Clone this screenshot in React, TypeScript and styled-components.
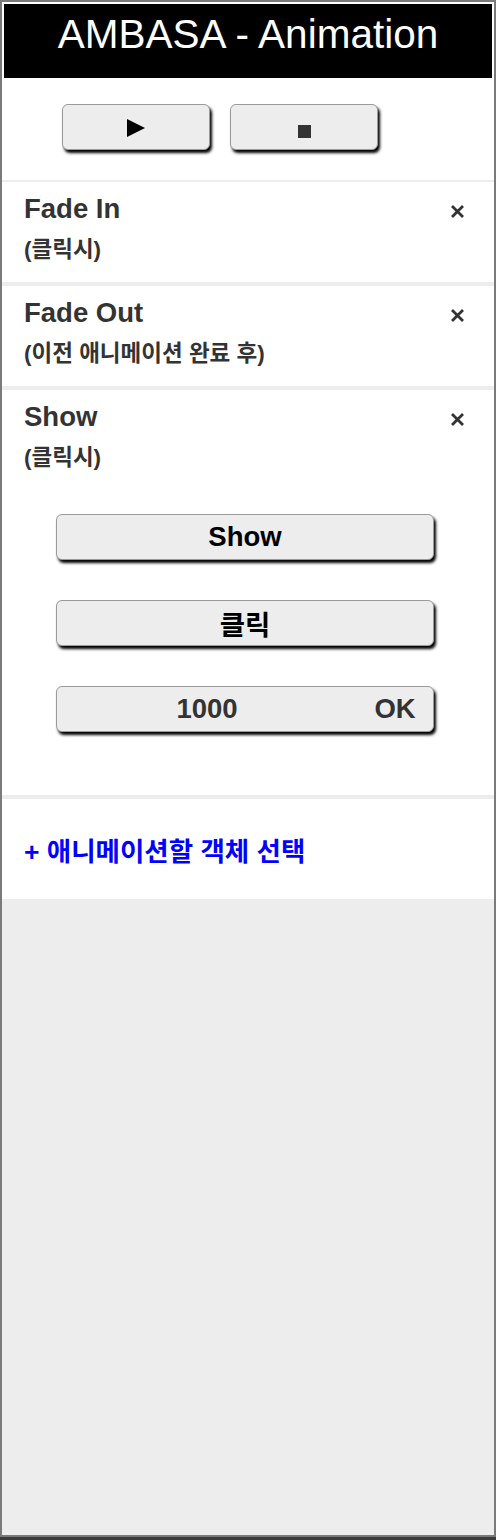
import React from 'react'
import styled, { createGlobalStyle } from 'styled-components'

const GlobalStyle = createGlobalStyle`
  html, body {
    margin: 0;
    padding: 0;
    background: #3c3c3c;
  }
  body {
    font-family: "Liberation Sans", "Noto Sans CJK KR", sans-serif;
  }
  * {
    box-sizing: border-box;
  }
`

const Outer = styled.div`
  height: 1540px;
  padding-bottom: 3px;
  background: #3c3c3c;
`

const Frame = styled.div`
  display: flex;
  flex-direction: column;
  height: 100%;
  border: 2px solid #7a7a7a;
  background: #ededed;
  overflow: hidden;
`

const HeaderWrap = styled.div`
  background: #fff;
  padding: 2px 2px 0;
`

const Header = styled.h1`
  margin: 0;
  height: 74px;
  padding-top: 7px;
  background: #000;
  color: #fff;
  font-size: 40.5px;
  font-weight: 400;
  line-height: 46px;
  text-align: center;
`

const Toolbar = styled.div`
  display: flex;
  gap: 20px;
  height: 102px;
  padding: 26px 0 0 60px;
  background: #fff;
`

const RaisedButton = styled.button<{ $width: number }>`
  display: flex;
  align-items: center;
  justify-content: center;
  width: ${p => p.$width}px;
  height: 46px;
  padding: 0;
  border: 1px solid #9a9a9a;
  border-radius: 6px;
  background: #ededed;
  box-shadow: 2px 3px 3px #000;
  font-family: "Liberation Sans", "Noto Sans CJK KR", sans-serif;
  font-size: 27.5px;
  font-weight: 700;
  color: #000;
  cursor: pointer;
`

const Icon = styled.svg<{ $shift: number }>`
  display: block;
  margin-top: ${p => p.$shift}px;
`

const Item = styled.div<{ $last?: boolean }>`
  background: #fff;
  border-top: 2px solid #ededed;
  border-bottom: 2px solid #ededed;
  padding: 11px 30px ${p => (p.$last ? '63px' : '19px')} 22px;
`

const TitleRow = styled.div`
  display: flex;
  align-items: center;
  justify-content: space-between;
`

const Title = styled.div`
  font-size: 27.5px;
  font-weight: 700;
  line-height: 32px;
  color: #333;
`

const Close = styled.svg`
  display: block;
  margin-top: 4px;
  cursor: pointer;
`

const Trigger = styled.div`
  margin-top: 11px;
  font-size: 22.5px;
  font-weight: 700;
  line-height: 27px;
  color: #333;
`

const Options = styled.div`
  display: flex;
  flex-direction: column;
  gap: 40px;
  margin: 43px 0 0 32px;
`

const DurationBox = styled.div`
  display: flex;
  width: 378px;
  height: 46px;
  border: 1px solid #9a9a9a;
  border-radius: 6px;
  background: #ededed;
  box-shadow: 2px 3px 3px #000;
  overflow: hidden;
`

const DurationInput = styled.input`
  flex: 1;
  min-width: 0;
  border: 0;
  background: transparent;
  text-align: center;
  font-family: "Liberation Sans", sans-serif;
  font-size: 27.5px;
  font-weight: 700;
  color: #333;
  outline: none;
`

const OkButton = styled.button`
  width: 76px;
  border: 0;
  padding: 0;
  background: transparent;
  font-family: "Liberation Sans", sans-serif;
  font-size: 27.5px;
  font-weight: 700;
  color: #333;
  cursor: pointer;
`

const AddRow = styled.div`
  display: flex;
  align-items: center;
  height: 104px;
  padding-left: 22px;
  border-top: 2px solid #ededed;
  border-bottom: 2px solid #ededed;
  background: #fff;
  background-clip: padding-box;
`

const AddLink = styled.a`
  font-size: 26.5px;
  font-weight: 700;
  color: #0000ff;
  text-decoration: none;
  cursor: pointer;
`

const CloseIcon = () => (
  <Close width="13" height="13" viewBox="0 0 13 13">
    <path d="M2 2 L11 11 M11 2 L2 11" stroke="#333" strokeWidth="2.8" strokeLinecap="square" />
  </Close>
)

interface Anim {
  name: string
  trigger: string
}

const animations: Anim[] = [
  { name: 'Fade In', trigger: '(클릭시)' },
  { name: 'Fade Out', trigger: '(이전 애니메이션 완료 후)' },
  { name: 'Show', trigger: '(클릭시)' },
]

export default function App() {
  return (
    <Outer>
      <GlobalStyle />
      <Frame>
        <HeaderWrap>
          <Header>AMBASA - Animation</Header>
        </HeaderWrap>
        <Toolbar>
          <RaisedButton $width={148}>
            <Icon $shift={2} width="18" height="18" viewBox="0 0 18 18">
              <polygon points="0,0 18,9 0,18" fill="#000" />
            </Icon>
          </RaisedButton>
          <RaisedButton $width={148}>
            <Icon $shift={9} width="13" height="13" viewBox="0 0 13 13">
              <rect width="13" height="13" fill="#333" />
            </Icon>
          </RaisedButton>
        </Toolbar>
        {animations.map((a, i) => {
          const last = i === animations.length - 1
          return (
            <Item key={a.name} $last={last}>
              <TitleRow>
                <Title>{a.name}</Title>
                <CloseIcon />
              </TitleRow>
              <Trigger>{a.trigger}</Trigger>
              {last && (
                <Options>
                  <RaisedButton $width={378}>Show</RaisedButton>
                  <RaisedButton $width={378}>클릭</RaisedButton>
                  <DurationBox>
                    <DurationInput defaultValue="1000" />
                    <OkButton>OK</OkButton>
                  </DurationBox>
                </Options>
              )}
            </Item>
          )
        })}
        <AddRow>
          <AddLink>+ 애니메이션할 객체 선택</AddLink>
        </AddRow>
      </Frame>
    </Outer>
  )
}
